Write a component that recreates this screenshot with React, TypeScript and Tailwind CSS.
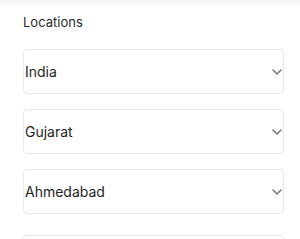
import React from 'react';

const locations = ['India', 'Gujarat', 'Ahmedabad'];

const Chevron = () => (
  <svg width="10" height="6" viewBox="0 0 10 6" fill="none" className="shrink-0">
    <path d="M1 1l4 4 4-4" stroke="#7a7a7a" strokeWidth="1.6" strokeLinecap="round" strokeLinejoin="round" />
  </svg>
);

export default function App() {
  return (
    <div className="w-[300px] h-[239px] bg-white overflow-hidden" style={{ fontFamily: 'Inter, "Noto Sans", sans-serif' }}>
      <div className="h-[7px] bg-gradient-to-b from-[#f1f1f1] to-white" />
      <div className="pl-[23px] pr-[16px]">
        <h3 className="mt-[5px] text-[13px] leading-[20px] text-[#2a2a2a]">Locations</h3>
        <div className="mt-[17px] flex flex-col gap-[15px]">
          {locations.map((loc) => (
            <div
              key={loc}
              className="h-[45px] flex items-center justify-between border border-[#e8e8e8] rounded-[4px] pl-[1px] pr-[1px]"
            >
              <span className="text-[14px] text-[#1f1f1f]">{loc}</span>
              <Chevron />
            </div>
          ))}
          <div className="mt-[6px] h-[44px] border border-[#e8e8e8] rounded-[4px]" />
        </div>
      </div>
    </div>
  );
}
